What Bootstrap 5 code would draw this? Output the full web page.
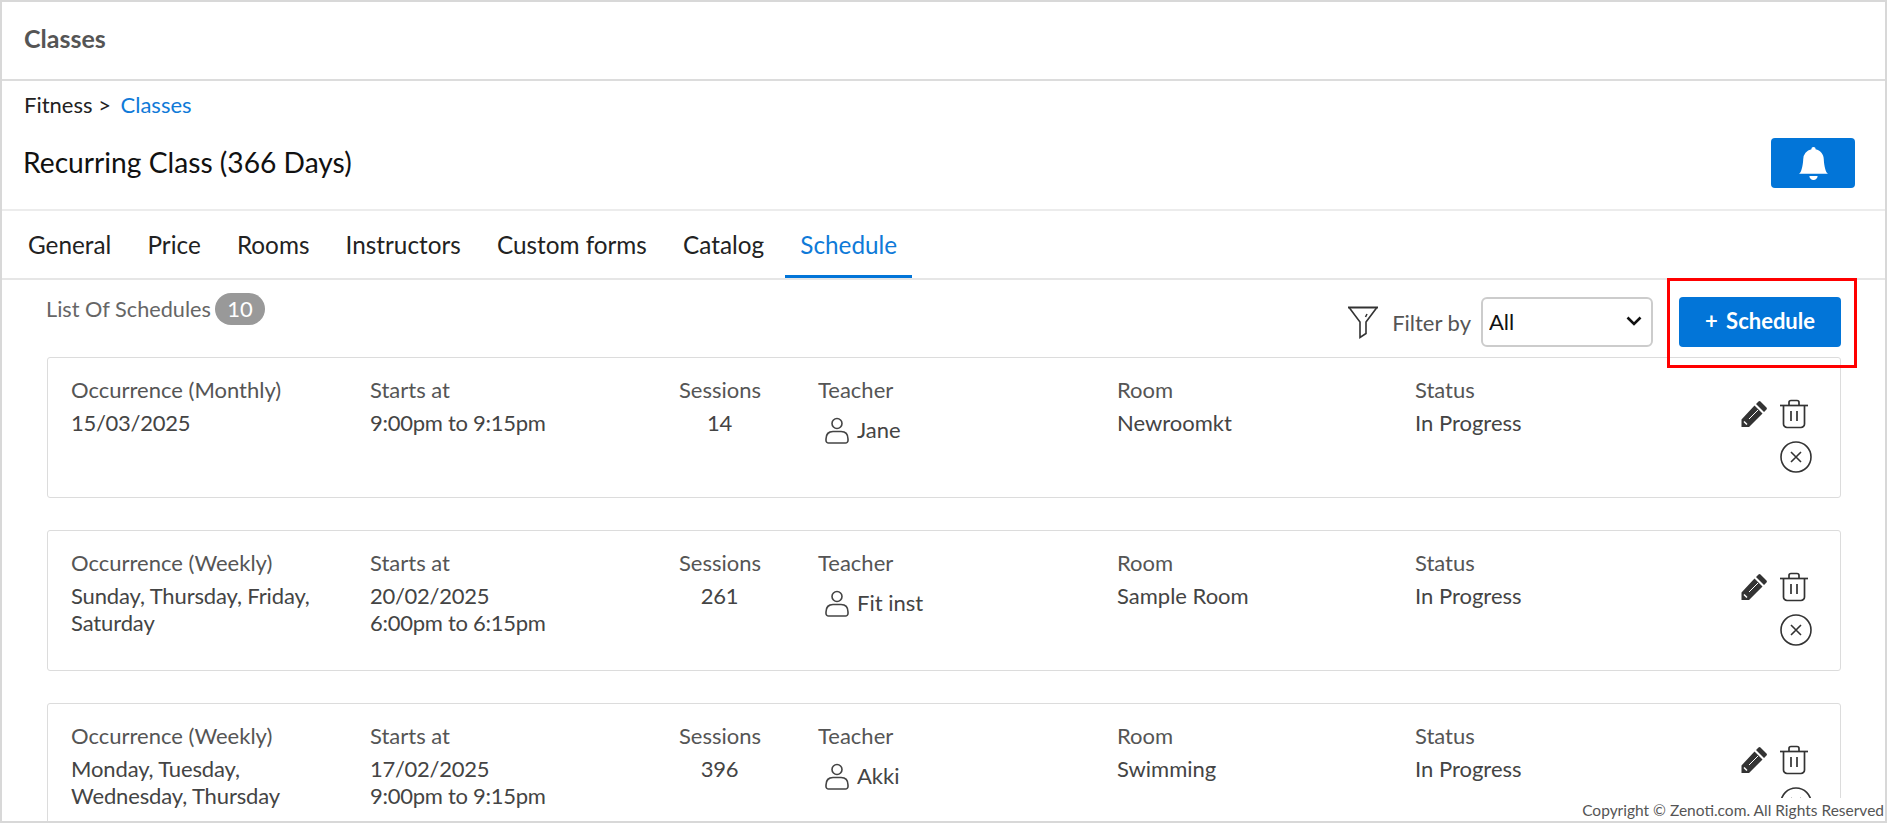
<!DOCTYPE html>
<html lang="en">
<head>
<meta charset="utf-8">
<title>Classes</title>
<link href="https://cdn.jsdelivr.net/npm/bootstrap@5.3.0/dist/css/bootstrap.min.css" rel="stylesheet">
<style>
html,body{height:100%;overflow:hidden;background:#fff}
body{font-family:Lato,"Liberation Sans",sans-serif;color:#444}
.frame{position:relative;height:823px;border:2px solid #d8d8d8;overflow:hidden;background:#fff}
.topbar{height:79px;border-bottom:2px solid #dcdcdc;padding:0 22px 4px;font-size:25px;font-weight:700;color:#555}
.crumbs{height:50px;padding:7px 22px 0;font-size:22px;color:#222}
.crumbs a{color:#0f7ad8;text-decoration:none;margin-left:4px}
.titlerow{height:80px;border-bottom:2px solid #ececec;padding:0 30px 14px 21px}
.titlerow h1{font-size:28.2px;font-weight:400;color:#111;margin:0}
.zbtn{background:#0275d8;border:0;border-radius:4px;color:#fff;padding:0}
.zbtn:hover{background:#0275d8;color:#fff}
.bellbtn{width:84px;height:50px}
.tabsbar{height:69px;border-bottom:2px solid #e6e6e6;padding-left:11px;gap:6.2px}
.tabsbar .nav-link{font-size:24.3px;color:#222;padding:0 15px;height:67px;line-height:67px;border-bottom:3px solid transparent}
.tabsbar .nav-link.active{color:#0f7ad8;border-bottom-color:#0275d8}
.panel{padding:0 44px 0 45px}
.listhead{height:77px}
.listname{font-size:21.7px;color:#666;margin:13px 0 0 -1px}
.cnt{background:#999;color:#fff;border-radius:16px;width:50px;height:32px;line-height:32px;text-align:center;font-size:22px;margin-left:4px;margin-top:13px}
.filterlabel{font-size:22px;color:#555;margin:0 10px 0 13px}
.filterselect{width:172px;height:50px;font-size:22px;color:#111;border:2px solid #ccc;border-radius:6px;padding:0 30px 2px 6px;--bs-form-select-bg-img:none}
.filterwrap{position:relative}
.chev{position:absolute;right:11px;top:19px;pointer-events:none}
.addbtn{width:162px;height:50px;font-size:22px;font-weight:700;margin-left:26px;padding-bottom:4px}
.addbtn span{margin-right:3px}
.sched{height:141px;border:1px solid #dcdcdc;border-radius:3px;margin-bottom:32px;padding:19px 0 0 23px;font-size:22px;line-height:26.5px;color:#444}
.sched .lbl{color:#555;margin-bottom:7px;line-height:26px}
.dateval{letter-spacing:-.28px}
.wordval{letter-spacing:-.13px}
.c1{width:299px}.c2{width:309px}.c3{width:139px;padding-right:58px}.c4{width:299px}.c5{width:298px}.c6{width:239px}
.teach{margin-top:12px;height:30px}
.teach svg{margin:0 8px 0 7px}
.acts{width:80px;margin:23px 0 0 86px}
.acts svg{display:block}
.trash{margin:-1px 0 0 11px}
.cancel{margin:12px 0 0 40px}
.copy{position:absolute;right:0;bottom:0;background:#fff;font-size:15.5px;line-height:24px;color:#555;padding:0 1px 0 8px;height:23px;white-space:nowrap;text-align:right}
.redbox{position:absolute;left:1665px;top:276px;width:190px;height:90px;border:3px solid #f00;pointer-events:none}
</style>
</head>
<body>
<div class="frame">
  <div class="topbar d-flex align-items-center">Classes</div>
  <div class="crumbs">Fitness &gt; <a href="#">Classes</a></div>
  <div class="titlerow d-flex align-items-center justify-content-between">
    <h1>Recurring Class (366 Days)</h1>
    <button class="btn zbtn bellbtn d-flex align-items-center justify-content-center" aria-label="Notifications">
      <svg width="33" height="33" viewBox="0 0 16 16" fill="#fff"><path d="M8 16a2 2 0 0 0 2-2H6a2 2 0 0 0 2 2zm.995-14.901a1 1 0 1 0-1.99 0A5.002 5.002 0 0 0 3 6c0 1.098-.5 6-2 7h14c-1.5-1-2-5.902-2-7 0-2.42-1.72-4.44-4.005-4.901z"/></svg>
    </button>
  </div>
  <ul class="nav tabsbar">
    <li class="nav-item"><a class="nav-link" href="#">General</a></li>
    <li class="nav-item"><a class="nav-link" href="#">Price</a></li>
    <li class="nav-item"><a class="nav-link" href="#">Rooms</a></li>
    <li class="nav-item"><a class="nav-link" href="#">Instructors</a></li>
    <li class="nav-item"><a class="nav-link" href="#">Custom forms</a></li>
    <li class="nav-item"><a class="nav-link" href="#">Catalog</a></li>
    <li class="nav-item"><a class="nav-link active" href="#">Schedule</a></li>
  </ul>
  <div class="panel">
    <div class="listhead d-flex justify-content-between">
      <div class="d-flex align-items-start"><span class="listname">List Of Schedules</span><span class="cnt">10</span></div>
      <div class="d-flex align-items-start" style="padding-top:17px">
        <div class="d-flex align-items-center" style="height:50px">
          <svg width="32" height="34" viewBox="0 0 32 34" fill="none" stroke="#333" stroke-width="1.6"><path d="M1 2.5H31" stroke-width="2"/><path d="M2.5 3L13 17V32.500L19 28.500V17L29.500 3"/><path d="M20 9l-1.500 3"/></svg>
          <span class="filterlabel">Filter by</span>
          <div class="filterwrap">
            <select class="form-select filterselect"><option>All</option></select>
            <svg class="chev" width="16" height="10" viewBox="0 0 16 10" fill="none" stroke="#111" stroke-width="2.6"><path d="M1.5 1.5L8 8l6.5-6.5"/></svg>
          </div>
        </div>
        <button class="btn zbtn addbtn"><span>+</span> Schedule</button>
      </div>
    </div>

    <div class="sched d-flex">
      <div class="c1"><div class="lbl">Occurrence (Monthly)</div><div class="dateval">15/03/2025</div></div>
      <div class="c2"><div class="lbl">Starts at</div><div class="dateval">9:00pm to 9:15pm</div></div>
      <div class="c3 text-center"><div class="lbl">Sessions</div><div class="dateval">14</div></div>
      <div class="c4"><div class="lbl">Teacher</div><div class="teach d-flex align-items-center"><svg width="24" height="27" viewBox="0 0 24 27" fill="none" stroke="#444" stroke-width="1.6"><circle cx="12" cy="6.5" r="5"/><path d="M1 22c0-5 3-7.500 7-7.500h8c4 0 7 2.500 7 7.500v1.500a2.500 2.500 0 0 1-2.500 2.500h-17A2.500 2.500 0 0 1 1 23.500z"/></svg>Jane</div></div>
      <div class="c5"><div class="lbl">Room</div><div>Newroomkt</div></div>
      <div class="c6"><div class="lbl">Status</div><div>In Progress</div></div>
      <div class="acts">
        <div class="d-flex align-items-start">
          <svg width="28" height="28" viewBox="0 0 28 28" fill="#333"><path d="M20.500 1.500l6 6a1.500 1.500 0 0 1 0 2L24 12l-8-8 2.500-2.500a1.500 1.500 0 0 1 2 0zM14.500 5.500l8 8L9 27H1.500v-7.500z"/><path d="M4 21.500l3 3" stroke="#fff" stroke-width="1.500"/><path d="M9 19L18 10" stroke="#fff" stroke-width="1"/></svg>
          <svg class="trash" width="30" height="30" viewBox="0 0 30 30" fill="none" stroke="#333" stroke-width="1.700"><path d="M1 6.500h28"/><path d="M10 6V3.500A2 2 0 0 1 12 1.500h6a2 2 0 0 1 2 2V6"/><path d="M4.500 7v18a3.500 3.500 0 0 0 3.500 3.500h14a3.500 3.500 0 0 0 3.500-3.500V7"/><path d="M12 12v10M18 12v10"/></svg>
        </div>
        <svg class="cancel" width="32" height="32" viewBox="0 0 32 32" fill="none" stroke="#333" stroke-width="1.600"><circle cx="16" cy="16" r="15"/><path d="M11 11l10 10M21 11L11 21"/></svg>
      </div>
    </div>

    <div class="sched d-flex">
      <div class="c1"><div class="lbl">Occurrence (Weekly)</div><div class="wordval">Sunday, Thursday, Friday,<br>Saturday</div></div>
      <div class="c2"><div class="lbl">Starts at</div><div class="dateval">20/02/2025<br>6:00pm to 6:15pm</div></div>
      <div class="c3 text-center"><div class="lbl">Sessions</div><div class="dateval">261</div></div>
      <div class="c4"><div class="lbl">Teacher</div><div class="teach d-flex align-items-center"><svg width="24" height="27" viewBox="0 0 24 27" fill="none" stroke="#444" stroke-width="1.6"><circle cx="12" cy="6.5" r="5"/><path d="M1 22c0-5 3-7.500 7-7.500h8c4 0 7 2.500 7 7.500v1.500a2.500 2.500 0 0 1-2.500 2.500h-17A2.500 2.500 0 0 1 1 23.500z"/></svg>Fit inst</div></div>
      <div class="c5"><div class="lbl">Room</div><div>Sample Room</div></div>
      <div class="c6"><div class="lbl">Status</div><div>In Progress</div></div>
      <div class="acts">
        <div class="d-flex align-items-start">
          <svg width="28" height="28" viewBox="0 0 28 28" fill="#333"><path d="M20.500 1.500l6 6a1.500 1.500 0 0 1 0 2L24 12l-8-8 2.500-2.500a1.500 1.500 0 0 1 2 0zM14.500 5.500l8 8L9 27H1.500v-7.500z"/><path d="M4 21.500l3 3" stroke="#fff" stroke-width="1.500"/><path d="M9 19L18 10" stroke="#fff" stroke-width="1"/></svg>
          <svg class="trash" width="30" height="30" viewBox="0 0 30 30" fill="none" stroke="#333" stroke-width="1.700"><path d="M1 6.500h28"/><path d="M10 6V3.500A2 2 0 0 1 12 1.500h6a2 2 0 0 1 2 2V6"/><path d="M4.500 7v18a3.500 3.500 0 0 0 3.500 3.500h14a3.500 3.500 0 0 0 3.500-3.500V7"/><path d="M12 12v10M18 12v10"/></svg>
        </div>
        <svg class="cancel" width="32" height="32" viewBox="0 0 32 32" fill="none" stroke="#333" stroke-width="1.600"><circle cx="16" cy="16" r="15"/><path d="M11 11l10 10M21 11L11 21"/></svg>
      </div>
    </div>

    <div class="sched d-flex">
      <div class="c1"><div class="lbl">Occurrence (Weekly)</div><div class="wordval">Monday, Tuesday,<br>Wednesday, Thursday</div></div>
      <div class="c2"><div class="lbl">Starts at</div><div class="dateval">17/02/2025<br>9:00pm to 9:15pm</div></div>
      <div class="c3 text-center"><div class="lbl">Sessions</div><div class="dateval">396</div></div>
      <div class="c4"><div class="lbl">Teacher</div><div class="teach d-flex align-items-center"><svg width="24" height="27" viewBox="0 0 24 27" fill="none" stroke="#444" stroke-width="1.6"><circle cx="12" cy="6.5" r="5"/><path d="M1 22c0-5 3-7.500 7-7.500h8c4 0 7 2.500 7 7.500v1.500a2.500 2.500 0 0 1-2.500 2.500h-17A2.500 2.500 0 0 1 1 23.500z"/></svg>Akki</div></div>
      <div class="c5"><div class="lbl">Room</div><div>Swimming</div></div>
      <div class="c6"><div class="lbl">Status</div><div>In Progress</div></div>
      <div class="acts">
        <div class="d-flex align-items-start">
          <svg width="28" height="28" viewBox="0 0 28 28" fill="#333"><path d="M20.500 1.500l6 6a1.500 1.500 0 0 1 0 2L24 12l-8-8 2.500-2.500a1.500 1.500 0 0 1 2 0zM14.500 5.500l8 8L9 27H1.500v-7.500z"/><path d="M4 21.500l3 3" stroke="#fff" stroke-width="1.500"/><path d="M9 19L18 10" stroke="#fff" stroke-width="1"/></svg>
          <svg class="trash" width="30" height="30" viewBox="0 0 30 30" fill="none" stroke="#333" stroke-width="1.700"><path d="M1 6.500h28"/><path d="M10 6V3.500A2 2 0 0 1 12 1.500h6a2 2 0 0 1 2 2V6"/><path d="M4.500 7v18a3.500 3.500 0 0 0 3.500 3.500h14a3.500 3.500 0 0 0 3.500-3.500V7"/><path d="M12 12v10M18 12v10"/></svg>
        </div>
        <svg class="cancel" width="32" height="32" viewBox="0 0 32 32" fill="none" stroke="#333" stroke-width="1.600"><circle cx="16" cy="16" r="15"/><path d="M11 11l10 10M21 11L11 21"/></svg>
      </div>
    </div>
  </div>
  <div class="redbox"></div>
  <div class="copy">Copyright © Zenoti.com. All Rights Reserved</div>
</div>
<script src="https://cdn.jsdelivr.net/npm/bootstrap@5.3.0/dist/js/bootstrap.bundle.min.js"></script>
</body>
</html>
